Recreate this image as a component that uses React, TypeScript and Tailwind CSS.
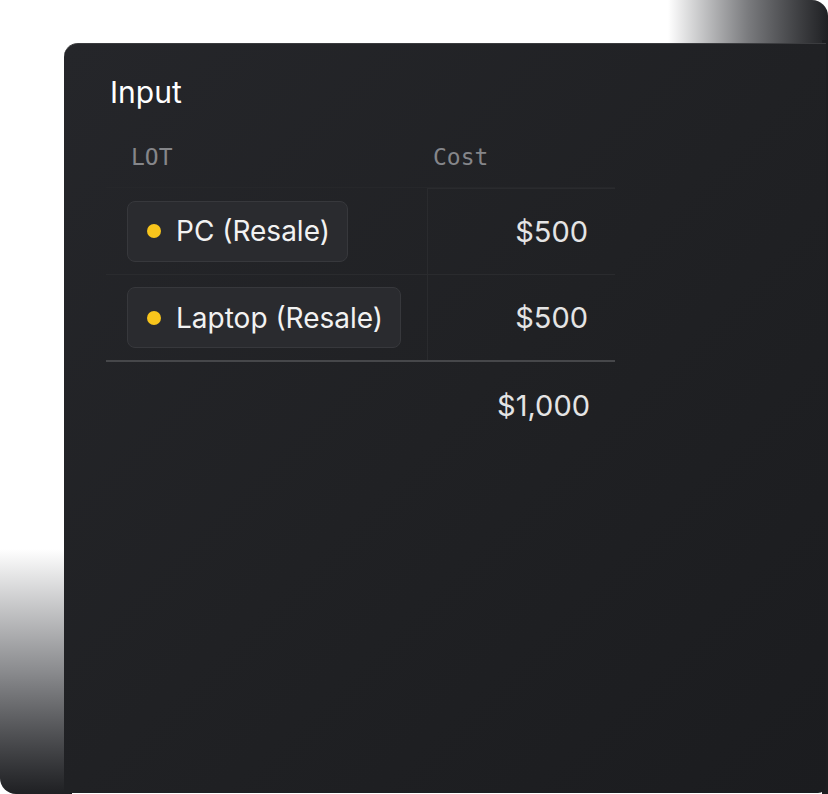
import React from 'react';

const rows = [
  { name: 'PC (Resale)', cost: '$500' },
  { name: 'Laptop (Resale)', cost: '$500' },
];

export default function App() {
  return (
    <div className="relative w-[828px] h-[794px] overflow-hidden bg-white font-['Inter','Noto_Sans',sans-serif]">
      {/* back card, faded into the page */}
      <div className="absolute top-0 right-0 h-[48px] w-[160px] rounded-tr-[16px] bg-gradient-to-r from-white via-[#7a7b7e] to-[#202124]" />
      <div className="absolute top-[40px] bottom-0 right-0 w-[6px] bg-[#1d1e21]" />
      <div className="absolute bottom-0 left-0 w-[72px] h-[245px] rounded-bl-[16px] bg-gradient-to-b from-white via-[#8a8b8e] to-[#1f2023]" />

      <div className="relative flex h-full pt-[43px] pl-[64px] pr-[2px] pb-[1px]">
        <div className="flex-1 flex flex-col rounded-tl-[14px] rounded-br-[8px] border-t border-[#3b3c3f] bg-gradient-to-br from-[#25262a] via-[#202124] to-[#1b1c1f] pl-[42px] pt-[29px]">
          <h1 className="text-[30px] leading-[38px] text-white pl-[4px]">Input</h1>

          <div className="w-[509px] mt-[21px]">
            {/* header */}
            <div className="grid grid-cols-[321px_188px] h-[56px] border-b border-[#26272a]">
              <div className="pl-[25px] pt-[8px] font-['DejaVu_Sans_Mono','Liberation_Mono',monospace] text-[23px] text-[#85868a]">LOT</div>
              <div className="pl-[6px] pt-[8px] font-['DejaVu_Sans_Mono','Liberation_Mono',monospace] text-[23px] text-[#85868a]">Cost</div>
            </div>

            {rows.map((r, i) => (
              <div
                key={r.name}
                className={`grid grid-cols-[321px_188px] h-[87px] ${i === 0 ? 'border-b border-[#2a2b2e]' : 'border-b-2 border-[#46474a]'}`}
              >
                <div className="flex items-center pl-[21px]">
                  <div className="flex items-center gap-[15px] h-[61px] pl-[19px] pr-[17px] rounded-[8px] border border-[#37383c] bg-[#2a2b2f]">
                    <span className="w-[14px] h-[14px] rounded-full bg-[#f8c51c]" />
                    <span className="text-[28px] text-[#f2f2f2] leading-none">{r.name}</span>
                  </div>
                </div>
                <div className={`flex items-center justify-end pr-[27px] border-l border-[#2a2b2e] ${i === 0 ? 'border-t' : ''}`}>
                  <span className="text-[29px] text-[#e4e4e4]">{r.cost}</span>
                </div>
              </div>
            ))}

            <div className="flex justify-end pr-[25px] pt-[22px]">
              <span className="text-[29px] text-[#e4e4e4]">$1,000</span>
            </div>
          </div>
        </div>
      </div>
    </div>
  );
}
